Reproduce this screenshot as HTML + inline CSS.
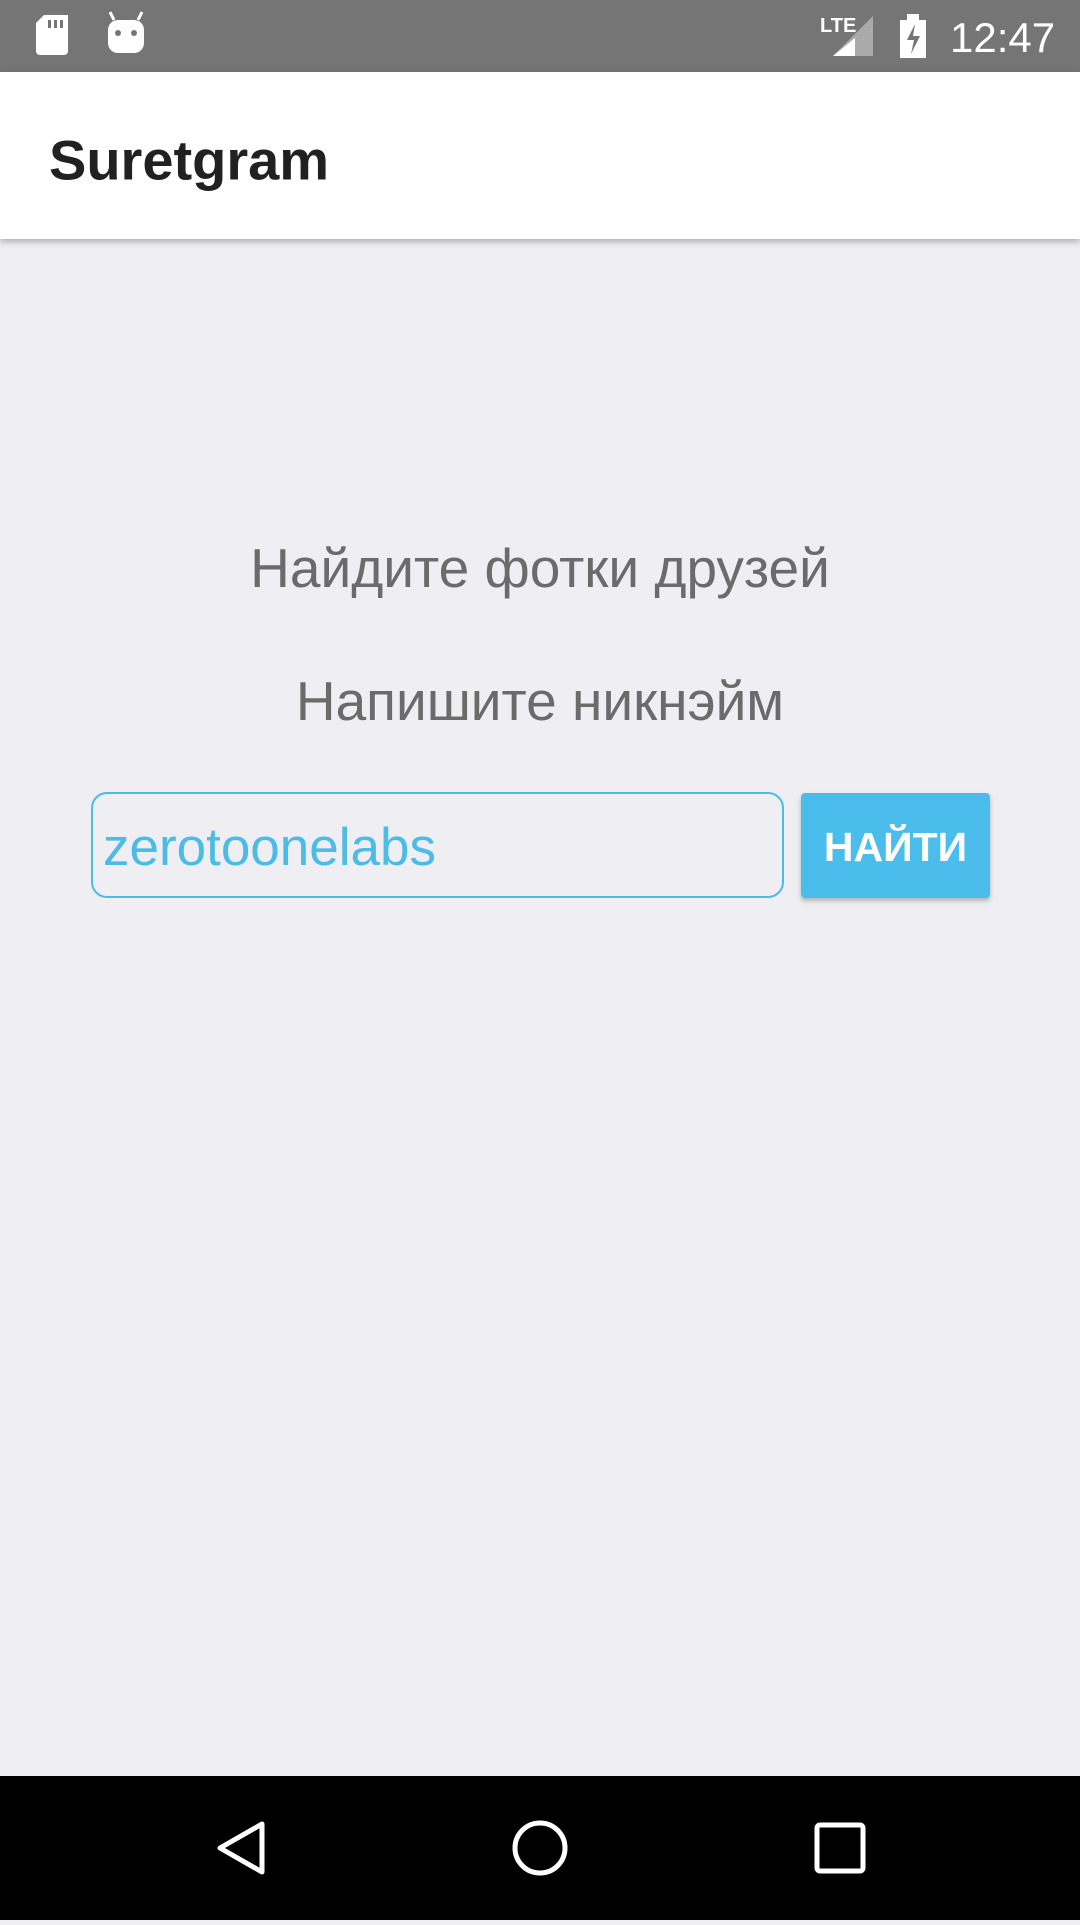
<!DOCTYPE html>
<html><head><meta charset="utf-8"><style>
body{margin:0;width:1080px;height:1920px;background:#efeef3;font-family:"Liberation Sans",sans-serif;position:relative;overflow:hidden}
.sb{position:absolute;top:0;left:0;width:1080px;height:72px;background:#757575}
.ab{position:absolute;top:72px;left:0;width:1080px;height:167px;background:#fff;box-shadow:0 3px 6px rgba(0,0,0,.25)}
.ab span{position:absolute;left:49px;top:50%;transform:translateY(-44%);font-size:56px;font-weight:bold;color:#212121}
.t{position:absolute;left:0;width:1080px;text-align:center;color:#6b6b6b;font-size:55px}
.inp{position:absolute;left:91px;top:792px;width:689px;height:102px;border:2px solid #4bbbe8;border-radius:16px;box-sizing:content-box}
.inp span{position:absolute;left:10px;top:50%;transform:translateY(-46%);font-size:53px;color:#4bbbe8}
.btn{position:absolute;left:801px;top:793px;width:189px;height:105px;background:#4bbdec;border-radius:4px;box-shadow:0 3px 5px rgba(0,0,0,.25);color:#fff;font-weight:bold;font-size:41px;display:flex;align-items:center;justify-content:center;padding-top:4px;box-sizing:border-box}
.nb{position:absolute;top:1776px;left:0;width:1080px;height:144px;background:#000}
</style></head><body>
<div class="sb">
<svg width="1080" height="72" style="position:absolute;left:0;top:0">
<path d="M44 15h24v36a4 4 0 0 1-4 4H40a4 4 0 0 1-4-4V23z" fill="#fff"/>
<rect x="48" y="20" width="3" height="8" fill="#757575"/><rect x="54" y="20" width="3" height="8" fill="#757575"/><rect x="60" y="20" width="3" height="8" fill="#757575"/>
<rect x="108" y="20" width="36" height="33" rx="10" fill="#fff"/><line x1="114" y1="20" x2="110" y2="12" stroke="#fff" stroke-width="3"/><line x1="138" y1="20" x2="142" y2="12" stroke="#fff" stroke-width="3"/>
<circle cx="118" cy="33" r="3" fill="#757575"/><circle cx="134" cy="33" r="3" fill="#757575"/>
<text x="820" y="32" font-size="20" font-weight="bold" fill="#fff" font-family="Liberation Sans">LTE</text>
<path d="M873 16v40h-40z" fill="#aaa"/><path d="M855 38v18h-22z" fill="#fff"/>
<rect x="900" y="20" width="26" height="38" fill="#fff"/><rect x="907" y="14" width="12" height="6" fill="#fff"/>
<path d="M915 24l-8 16h7l-3 14 9-18h-7z" fill="#757575"/>
<text x="950" y="52" font-size="42" fill="#fff" font-family="Liberation Sans">12:47</text>
</svg></div>
<div class="ab"><span>Suretgram</span></div>
<div class="t" style="top:536px">Найдите фотки друзей</div>
<div class="t" style="top:669px">Напишите никнэйм</div>
<div class="inp"><span>zerotoonelabs</span></div>
<div class="btn">НАЙТИ</div>
<div class="nb"><svg width="1080" height="144">
<path d="M262 48L220 72l42 24z" fill="none" stroke="#fff" stroke-width="5" stroke-linejoin="round"/>
<circle cx="540" cy="72" r="25" fill="none" stroke="#fff" stroke-width="5"/>
<rect x="817" y="49" width="46" height="46" rx="3" fill="none" stroke="#fff" stroke-width="5"/>
</svg></div>
</body></html>
